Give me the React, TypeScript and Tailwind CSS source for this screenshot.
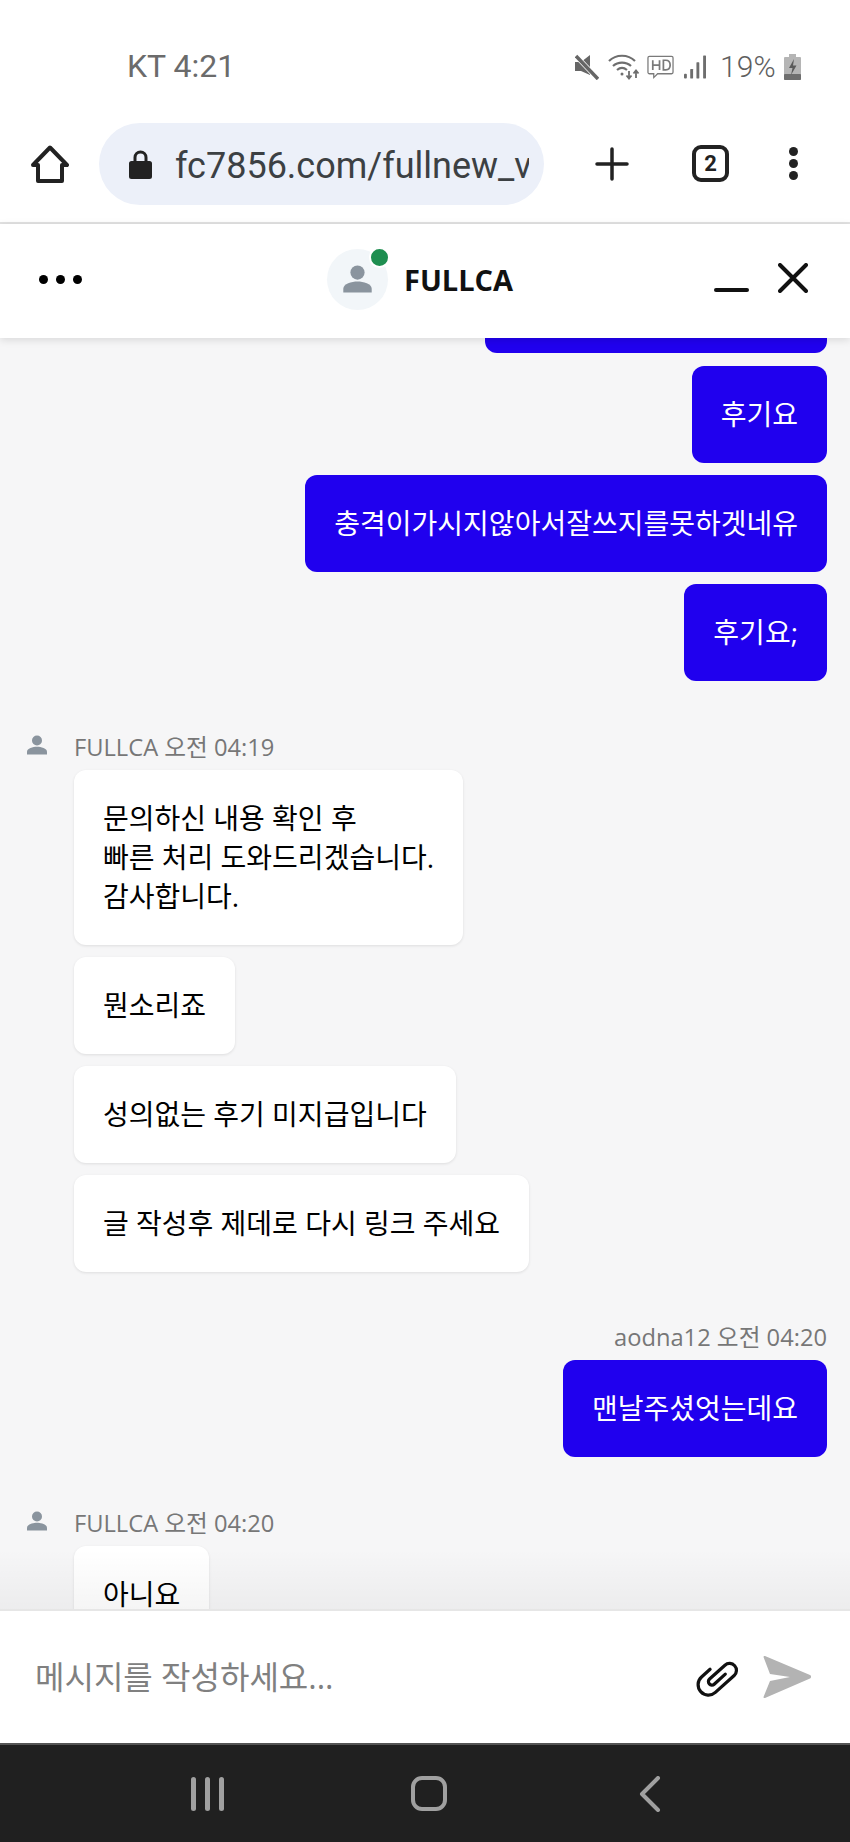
function PersonIcon({ className }: { className: string }) {
  return (
    <svg viewBox="0 0 24 22" className={className} fill="#8a949e">
      <circle cx="12" cy="6" r="5.5" />
      <path d="M1 21.5v-3c0-3.6 6.5-5.5 11-5.5s11 1.900 11 5.500v3z" />
    </svg>
  );
}

function StatusIcons() {
  return (
    <div className="flex items-center mt-[3px] text-[#6e6e6e]">
      <svg viewBox="0 0 24 26" className="w-[24px] h-[26px]" fill="#666">
        <path d="M0 8h6l9-7v20l-9-4H0z" />
        <path d="M1 2l22 23" stroke="#fff" strokeWidth="5" />
        <path d="M1 2l22 23" stroke="#666" strokeWidth="3.500" />
      </svg>
      <svg viewBox="0 0 32 26" className="w-[32px] h-[26px] ml-[9px]" fill="none" stroke="#6e6e6e" strokeWidth="2.200">
        <path d="M1 7c7-7 19-7 26 0" />
        <path d="M5 12c5-4.500 13-4.500 18 0" />
        <path d="M9 16c3-2.500 7-2.500 10 0" />
        <circle cx="14" cy="20" r="1.500" fill="#6e6e6e" stroke="none" />
        <path d="M21 17v7M18.500 21.500l2.500 3 2.500-3M28 24v-7M25.500 19.500l2.500-3 2.500 3" strokeWidth="1.800" />
      </svg>
      <svg viewBox="0 0 28 26" className="w-[27px] h-[26px] ml-[7px]" fill="none" stroke="#7a7a7a" strokeWidth="1.300">
        <path d="M2.500 2h23a1.500 1.500 0 0 1 1.500 1.500v15a1.500 1.500 0 0 1-1.500 1.500H11l-4 4v-4H2.500A1.500 1.500 0 0 1 1 18.500v-15A1.500 1.500 0 0 1 2.500 2z" />
        <path d="M6 6v10M13 6v10M6 11h7M17 6v10h2.500c3 0 4.500-2 4.500-5s-1.500-5-4.500-5z" strokeWidth="1.800" />
      </svg>
      <svg viewBox="0 0 23 24" className="w-[22px] h-[24px] ml-[10px]" fill="#6e6e6e">
        <rect x="0" y="19" width="3" height="5" rx="1" />
        <rect x="6.500" y="14" width="3" height="10" rx="0.500" />
        <rect x="13" y="7" width="3" height="17" rx="0.500" />
        <rect x="20" y="0" width="3" height="24" rx="0.500" />
      </svg>
      <span className="ml-[14px] text-[30px] leading-none font-['Roboto',sans-serif] font-light tracking-[0.2px] text-[#5f5f5f]">19%</span>
      <svg viewBox="0 0 17 26" className="w-[17px] h-[26px] ml-[8px]">
        <rect x="5" y="0" width="7" height="3" fill="#b5b5b5" />
        <rect x="0" y="3" width="17" height="23" rx="1" fill="#b5b5b5" />
        <rect x="0" y="20" width="17" height="6" rx="1" fill="#6e6e6e" />
        <path d="M10 5l-5 9h3.500l-1.500 7 5.500-9.500H9z" fill="#5a5a5a" />
      </svg>
    </div>
  );
}

function Toolbar() {
  return (
    <div className="h-[114px] flex items-start pt-[13px] border-b-2 border-[#e2e2e2] bg-white">
      <svg viewBox="0 0 38 38" className="w-[38px] h-[38px] ml-[31px] mt-[22px]" fill="none" stroke="#222" strokeWidth="4" strokeLinejoin="round">
        <path d="M2 20L19 2.500 36 20h-5v16H7V20z" />
      </svg>
      <div className="ml-[30px] w-[445px] h-[82px] rounded-full bg-[#ecf0f9] flex items-center pl-[30px] pr-[15px]">
        <svg viewBox="0 0 23 29" className="w-[23px] h-[29px] shrink-0" fill="#222">
          <path d="M4.500 11V7.500a7 7 0 0 1 14 0V11h2a2.500 2.500 0 0 1 2.500 2.500v13a2.500 2.500 0 0 1-2.500 2.500h-18A2.500 2.500 0 0 1 0 26.500v-13A2.500 2.500 0 0 1 2.500 11zm3 0h8V7.500a4 4 0 0 0-8 0z" />
        </svg>
        <div className="ml-[23px] pt-[3px] overflow-hidden whitespace-nowrap text-[36px] leading-none font-['Roboto',sans-serif] text-[#3c4043]">
          fc7856.com/fullnew_view
        </div>
      </div>
      <svg viewBox="0 0 34 34" className="w-[34px] h-[34px] ml-[51px] mt-[24px]" stroke="#222" strokeWidth="3.500" strokeLinecap="round">
        <path d="M17 2v30M2 17h30" />
      </svg>
      <div className="ml-[63px] mt-[22px] w-[37px] h-[37px] rounded-[9px] border-[4px] border-[#222] flex items-center justify-center text-[22px] leading-none font-bold font-['Roboto',sans-serif] text-[#222]">
        2
      </div>
      <div className="ml-[60px] mt-[24px] flex flex-col gap-[3px]">
        <div className="w-[9px] h-[9px] rounded-full bg-[#222]" />
        <div className="w-[9px] h-[9px] rounded-full bg-[#222]" />
        <div className="w-[9px] h-[9px] rounded-full bg-[#222]" />
      </div>
    </div>
  );
}

function ChatHeader() {
  return (
    <div className="relative z-10 h-[114px] pb-[4px] bg-white flex items-center shadow-[0_2px_8px_rgba(0,0,0,0.12)]">
      <div className="ml-[39px] flex gap-[8px]">
        <div className="w-[9px] h-[9px] rounded-full bg-black" />
        <div className="w-[9px] h-[9px] rounded-full bg-black" />
        <div className="w-[9px] h-[9px] rounded-full bg-black" />
      </div>
      <div className="relative ml-[245px] w-[61px] h-[61px] rounded-full bg-[#f2f6f9] flex items-center justify-center">
        <PersonIcon className="w-[31px] h-[30px]" />
        <div className="absolute right-[-2px] top-[-2px] w-[21px] h-[21px] rounded-full bg-[#1e8e50] border-[2px] border-white" />
      </div>
      <div className="ml-[16px] w-[108px] text-[29px] leading-none font-bold font-['Open_Sans',sans-serif] text-[#111]">FULLCA</div>
      <div className="ml-[202px] mt-[22px] w-[35px] h-[4px] rounded-full bg-[#111]" />
      <svg viewBox="0 0 30 30" className="w-[30px] h-[30px] ml-[29px] mt-[-2px]" stroke="#111" strokeWidth="4" strokeLinecap="round">
        <path d="M2 2l26 26M28 2L2 28" />
      </svg>
    </div>
  );
}

function MineBubble({ text }: { text: string }) {
  return (
    <div className="self-end rounded-[12px] bg-[#2000ee] px-[29px] py-[29px] text-[28px] leading-[39px] text-white whitespace-nowrap">
      {text}
    </div>
  );
}

function TheirBubble({ text }: { text: React.ReactNode }) {
  return (
    <div className="self-start rounded-[12px] bg-white px-[29px] py-[29px] text-[28px] leading-[39px] text-black whitespace-nowrap shadow-[0_1px_3px_rgba(0,0,0,0.1)]">
      {text}
    </div>
  );
}

function Meta({ text }: { text: string }) {
  return (
    <div className="flex items-center h-[24px]">
      <div className="w-[74px] flex pl-[26px]">
        <PersonIcon className="w-[22px] h-[20px] mt-[-6px]" />
      </div>
      <span className="text-[23.7px] leading-none text-[#777]">{text}</span>
    </div>
  );
}

export default function App() {
  return (
    <div className="w-[850px] h-[1842px] flex flex-col overflow-hidden bg-white font-['Open_Sans','Noto_Sans_CJK_KR',sans-serif]">
      <div className="h-[110px] flex items-start justify-between pt-[49px] pl-[127px] pr-[49px] bg-white">
        <span className="text-[32px] leading-[34px] font-['Roboto',sans-serif] text-[#6b6b6b]">KT 4:21</span>
        <StatusIcons />
      </div>
      <Toolbar />
      <ChatHeader />

      <div className="relative flex-1 min-h-0 overflow-hidden bg-[#f6f6f7] flex flex-col">
        <div className="self-end w-[342px] h-[15px] shrink-0 mr-[23px] rounded-b-[12px] bg-[#2000ee]" />
        <div className="flex flex-col gap-[12px] px-[23px] mt-[13px]">
          <MineBubble text="후기요" />
          <MineBubble text="충격이가시지않아서잘쓰지를못하겟네유" />
          <MineBubble text="후기요;" />
        </div>

        <div className="mt-[55px]">
          <Meta text="FULLCA 오전 04:19" />
          <div className="flex flex-col gap-[12px] pl-[74px] mt-[10px]">
            <TheirBubble text={<>문의하신 내용 확인 후<br />빠른 처리 도와드리겠습니다.<br />감사합니다.</>} />
            <TheirBubble text="뭔소리죠" />
            <TheirBubble text="성의없는 후기 미지급입니다" />
            <TheirBubble text="글 작성후 제데로 다시 링크 주세요" />
          </div>
        </div>

        <div className="mt-[54px] flex flex-col px-[23px]">
          <div className="self-end h-[24px] text-[23.7px] leading-none text-[#777]">aodna12 오전 04:20</div>
          <div className="flex flex-col mt-[10px]">
            <MineBubble text="맨날주셨엇는데요" />
          </div>
        </div>

        <div className="mt-[55px]">
          <Meta text="FULLCA 오전 04:20" />
          <div className="flex flex-col pl-[74px] mt-[10px]">
            <TheirBubble text="아니요" />
          </div>
        </div>

        <div className="absolute bottom-0 left-0 right-0 h-[60px] bg-gradient-to-b from-transparent to-[rgba(0,0,0,0.04)]" />
      </div>

      <div className="h-[134px] shrink-0 bg-white border-t-2 border-[#e6e6e6] flex items-center pl-[35px]">
        <span className="w-[659px] text-[32px] leading-none text-[#808080]">메시지를 작성하세요...</span>
        <svg viewBox="-20 -18 40 36" className="w-[46px] h-[42px]" fill="none" stroke="#111" strokeWidth="2.800" strokeLinecap="round">
          <path transform="rotate(-42)" d="M0 -9H-10A9 9 0 0 0 -10 9H12A6 6 0 0 0 12 -3H-6A3 3 0 0 0 -6 3H7" />
        </svg>
        <svg viewBox="0 0 48 44" className="w-[48px] h-[44px] ml-[23px]" fill="#b3b3b3">
          <path d="M2 1L47 20a2 2 0 0 1 0 3.500L2 43c-1 .4-1.700-.3-1.400-1.300L7 26l20-4-20-3L.6 2.300C.3 1.300 1 .6 2 1z" />
        </svg>
      </div>

      <div className="h-[99px] shrink-0 bg-[#202020] border-t-[2px] border-[#555] flex items-center">
        <div className="ml-[191px] flex gap-[9px]">
          <div className="w-[5px] h-[34px] rounded-full bg-[#a0a0a0]" />
          <div className="w-[5px] h-[34px] rounded-full bg-[#a0a0a0]" />
          <div className="w-[5px] h-[34px] rounded-full bg-[#a0a0a0]" />
        </div>
        <div className="ml-[187px] w-[36px] h-[35px] rounded-[11px] border-[4px] border-[#a0a0a0]" />
        <svg viewBox="0 0 22 36" className="w-[22px] h-[36px] ml-[192px]" fill="none" stroke="#a0a0a0" strokeWidth="4" strokeLinecap="round" strokeLinejoin="round">
          <path d="M19 2L3 18l16 16" />
        </svg>
      </div>
    </div>
  );
}
